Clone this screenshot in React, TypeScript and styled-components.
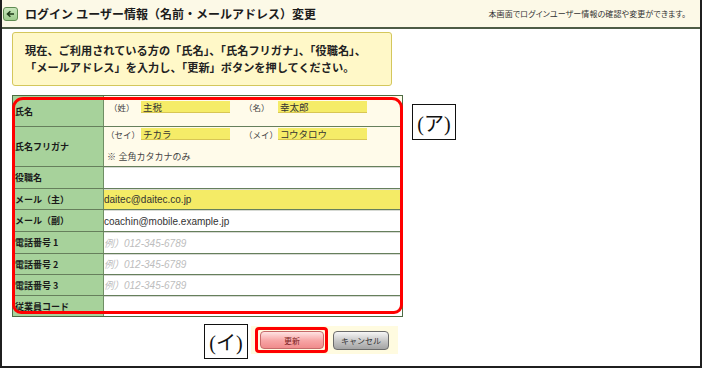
import React from "react";
import styled, { createGlobalStyle } from "styled-components";

const GlobalStyle = createGlobalStyle`
  html, body {
    margin: 0;
    padding: 0;
    background: #fff;
  }
  body {
    font-family: "Liberation Sans", "Noto Sans CJK JP", sans-serif;
    color: #222;
  }
`;

const Frame = styled.div`
  width: 702px;
  height: 368px;
  box-sizing: border-box;
  border: 2px solid #1f1f1f;
  border-top: none;
  background: #fff;
  overflow: hidden;
`;

const Header = styled.header`
  height: 27px;
  display: flex;
  align-items: center;
  background: #fcf9e7;
  border-bottom: 2px solid #4d5c45;
  padding-right: 14px;
`;

const BackIcon = styled.span`
  width: 15px;
  height: 14px;
  margin-left: 1px;
  margin-top: 1px;
  box-sizing: border-box;
  display: flex;
  align-items: center;
  justify-content: center;
  border: 1px solid #5f8c52;
  border-radius: 3px;
  background: linear-gradient(#c9e6bc, #9dcb8c);
`;

const Title = styled.h1`
  margin: 0 0 0 7px;
  font-size: 12px;
  font-weight: bold;
  color: #1c1c1c;
  white-space: nowrap;
`;

const HeaderNote = styled.span`
  margin-left: auto;
  font-size: 8px;
  color: #333;
  font-feature-settings: "palt";
  letter-spacing: 0.1px;
  white-space: nowrap;
`;

const Body = styled.main`
  padding-left: 10px;
`;

const Notice = styled.div`
  margin-top: 3px;
  width: 380px;
  height: 54px;
  box-sizing: border-box;
  padding: 9px 12px 0;
  border: 1px solid #d4c75c;
  border-radius: 3px;
  background: #fff8c8;
  font-family: "Noto Sans CJK JP", sans-serif;
  font-size: 11.2px;
  font-weight: bold;
  line-height: 17px;
  color: #222;
  white-space: nowrap;
`;

const FormArea = styled.div`
  margin-top: 9px;
  display: flex;
  align-items: flex-start;
`;

const FormTable = styled.div`
  position: relative;
  width: 391px;
  box-sizing: border-box;
  border: 1px solid #4e6b44;
`;

const Row = styled.div<{ $h: number }>`
  display: grid;
  grid-template-columns: 91px 1fr;
  height: ${({ $h }) => $h}px;
  box-sizing: border-box;
  & + & {
    border-top: 1px solid #667f5c;
  }
`;

const Label = styled.div`
  display: flex;
  align-items: center;
  padding-left: 2px;
  background: #a7d29b;
  border-right: 1px solid #6f8f64;
  font-family: "Noto Sans CJK JP", sans-serif;
  font-size: 9px;
  font-weight: bold;
  color: #1a1a1a;
  white-space: nowrap;
`;

const NameCell = styled.div<{ $top: number }>`
  background: #fffbea;
  display: flex;
  flex-direction: column;
  padding-top: ${({ $top }) => $top}px;
`;

const NameLine = styled.div`
  display: flex;
  align-items: center;
  height: 12px;
`;

const NameTag = styled.span<{ $w: number; $pad: number }>`
  width: ${({ $w }) => $w}px;
  padding-left: ${({ $pad }) => $pad}px;
  box-sizing: border-box;
  font-size: 8.5px;
  color: #444;
  white-space: nowrap;
  overflow: hidden;
`;

const NameInput = styled.input`
  width: 89px;
  height: 12px;
  box-sizing: border-box;
  margin: 0;
  padding: 0 0 0 2px;
  border: none;
  border-bottom: 1px solid #d8c654;
  background: #f5ec68;
  font-family: "Liberation Sans", "Noto Sans CJK JP", sans-serif;
  font-size: 9.5px;
  color: #333;
  outline: none;
`;

const Hint = styled.span`
  margin-top: 10px;
  padding-left: 3px;
  font-size: 9px;
  color: #444;
`;

const FieldInput = styled.input<{ $tone?: "white" | "yellow" }>`
  width: 100%;
  height: 100%;
  box-sizing: border-box;
  margin: 0;
  padding: 1px 0 0 0;
  border: none;
  box-shadow: inset 0 1px 0 #d7dad4;
  background: ${({ $tone }) => ($tone === "yellow" ? "#f4eb66" : "#fff")};
  font-family: "Liberation Sans", "Noto Sans CJK JP", sans-serif;
  font-size: 10px;
  color: #333;
  outline: none;
  &::placeholder {
    color: #bdbdbd;
    font-style: italic;
  }
`;

const Ring = styled.div<{ $radius: string }>`
  position: absolute;
  pointer-events: none;
  box-sizing: border-box;
  border: 3px solid #f00;
  border-radius: ${({ $radius }) => $radius};
`;

const TableRing = styled(Ring)`
  top: 1px;
  left: -1px;
  right: -1px;
  bottom: 2px;
`;

const Callout = styled.div<{ $w: number; $h: number }>`
  width: ${({ $w }) => $w}px;
  height: ${({ $h }) => $h}px;
  box-sizing: border-box;
  border: 1px solid #111;
  background: #fff;
  display: flex;
  align-items: center;
  justify-content: center;
  font-family: "Liberation Serif", "Noto Sans CJK JP", serif;
  font-size: 20px;
  color: #111;
  flex-shrink: 0;
`;

const SideCallout = styled(Callout)`
  margin: 9px 0 0 9px;
`;

const ActionRow = styled.div`
  margin-top: 7px;
  padding-left: 192px;
  display: flex;
  align-items: flex-start;
`;

const ButtonBar = styled.div`
  margin: 2px 0 0 3px;
  width: 147px;
  height: 28px;
  background: #fffbe0;
  display: flex;
  align-items: center;
  padding-left: 4px;
  box-sizing: border-box;
`;

const UpdateWrap = styled.div`
  position: relative;
  padding: 4px 4px 4px 5px;
  display: flex;
`;

const ButtonRing = styled(Ring)`
  inset: 0;
`;

const Button = styled.button<{ $kind: "update" | "cancel" }>`
  height: ${({ $kind }) => ($kind === "update" ? 18 : 19)}px;
  width: ${({ $kind }) => ($kind === "update" ? 64 : 56)}px;
  margin: 0;
  padding: 0;
  border-radius: 4px;
  border: 1px solid ${({ $kind }) => ($kind === "update" ? "#c66a6a" : "#6b6b6b")};
  background: ${({ $kind }) =>
    $kind === "update"
      ? "linear-gradient(#ffe3e3, #f7a4a4 55%, #f08c8c)"
      : "linear-gradient(#f6f6f6, #c4c4c4 55%, #a4a4a4)"};
  font-family: "Liberation Sans", "Noto Sans CJK JP", sans-serif;
  font-size: 8px;
  color: ${({ $kind }) => ($kind === "update" ? "#7a2222" : "#333")};
  cursor: pointer;
`;

const CancelButton = styled(Button)`
  margin-left: 5px;
`;

const phoneRows = ["電話番号 1", "電話番号 2", "電話番号 3"];

export default function App() {
  return (
    <>
      <GlobalStyle />
      <Frame>
        <Header>
          <BackIcon>
            <svg width="9" height="8" viewBox="0 0 9 8">
              <path
                d="M8 4H2.2M4.4 1.2L1.4 4l3 2.8"
                fill="none"
                stroke="#1e3a18"
                strokeWidth="1.5"
              />
            </svg>
          </BackIcon>
          <Title>ログイン ユーザー情報（名前・メールアドレス）変更</Title>
          <HeaderNote>本画面でログインユーザー情報の確認や変更ができます。</HeaderNote>
        </Header>
        <Body>
          <Notice>
            現在、ご利用されている方の「氏名」、「氏名フリガナ」、「役職名」、
            <br />
            「メールアドレス」を入力し、「更新」ボタンを押してください。
          </Notice>
          <FormArea>
            <FormTable>
              <Row $h={30}>
                <Label>氏名</Label>
                <NameCell $top={5}>
                  <NameLine>
                    <NameTag $w={37} $pad={5}>（姓）</NameTag>
                    <NameInput readOnly defaultValue="主税" />
                    <NameTag $w={48} $pad={14}>（名）</NameTag>
                    <NameInput readOnly defaultValue="幸太郎" />
                  </NameLine>
                </NameCell>
              </Row>
              <Row $h={40}>
                <Label>氏名フリガナ</Label>
                <NameCell $top={1}>
                  <NameLine>
                    <NameTag $w={37} $pad={2}>（セイ）</NameTag>
                    <NameInput readOnly defaultValue="チカラ" />
                    <NameTag $w={48} $pad={14}>（メイ）</NameTag>
                    <NameInput readOnly defaultValue="コウタロウ" />
                  </NameLine>
                  <Hint>※ 全角カタカナのみ</Hint>
                </NameCell>
              </Row>
              <Row $h={22}>
                <Label>役職名</Label>
                <FieldInput readOnly defaultValue="" />
              </Row>
              <Row $h={21}>
                <Label>メール（主）</Label>
                <FieldInput $tone="yellow" readOnly defaultValue="daitec@daitec.co.jp" />
              </Row>
              <Row $h={22}>
                <Label>メール（副）</Label>
                <FieldInput readOnly defaultValue="coachin@mobile.example.jp" />
              </Row>
              {phoneRows.map((label, i) => (
                <Row key={label} $h={i === 0 ? 22 : 21}>
                  <Label>{label}</Label>
                  <FieldInput readOnly placeholder="例）012-345-6789" />
                </Row>
              ))}
              <Row $h={21}>
                <Label>従業員コード</Label>
                <FieldInput readOnly defaultValue="" />
              </Row>
              <TableRing $radius="11px 11px 9px 9px" />
            </FormTable>
            <SideCallout $w={44} $h={36}>(ア)</SideCallout>
          </FormArea>
          <ActionRow>
            <Callout $w={44} $h={35}>(イ)</Callout>
            <ButtonBar>
              <UpdateWrap>
                <Button $kind="update" type="button">更新</Button>
                <ButtonRing $radius="4px" />
              </UpdateWrap>
              <CancelButton $kind="cancel" type="button">キャンセル</CancelButton>
            </ButtonBar>
          </ActionRow>
        </Body>
      </Frame>
    </>
  );
}
